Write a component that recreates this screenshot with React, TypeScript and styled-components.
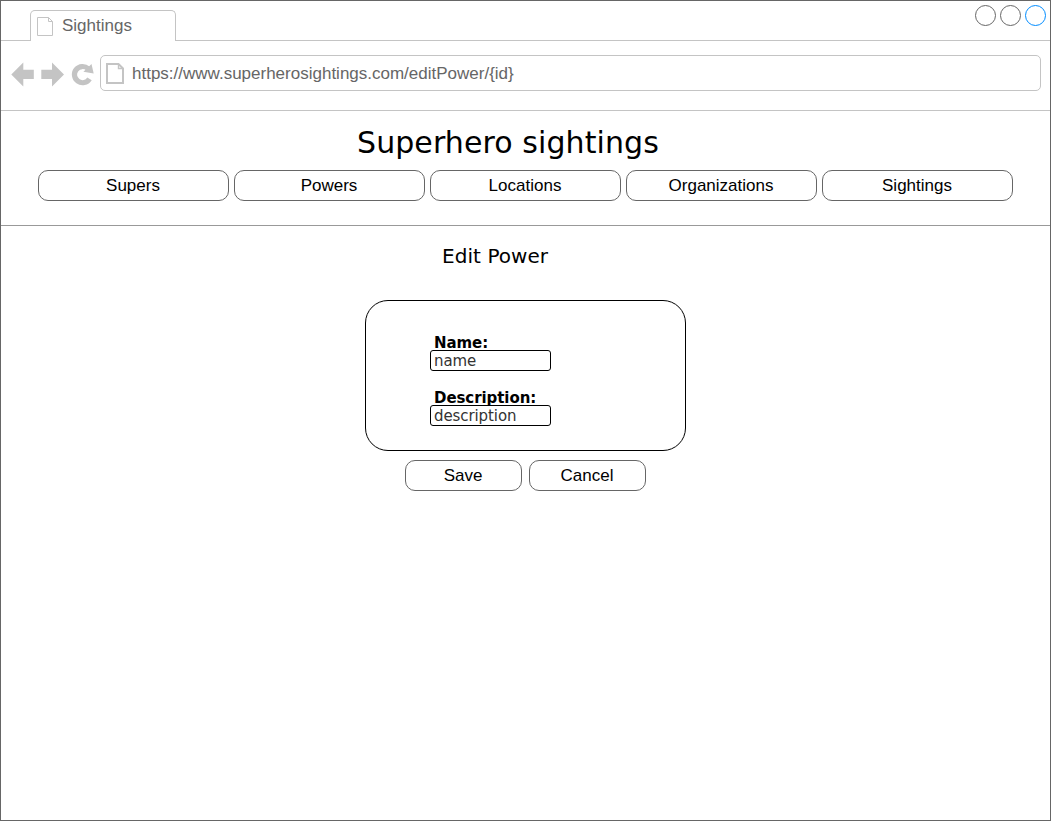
import React from "react";
import styled, { createGlobalStyle } from "styled-components";

const GlobalStyle = createGlobalStyle`
  *, *::before, *::after { box-sizing: border-box; }
  html, body { margin: 0; padding: 0; background: #fff; }
`;

const sans = `"Liberation Sans", Arial, sans-serif`;
const verdana = `"DejaVu Sans", Verdana, sans-serif`;

const Window = styled.div`
  width: 1051px;
  height: 821px;
  border: 1px solid #666;
  background: #fff;
  overflow: hidden;
  font-family: ${sans};
  font-size: 17px;
  color: #000;
`;

const TabStrip = styled.div`
  display: flex;
  height: 40px;
`;

const StripLine = styled.div<{ $width?: number }>`
  width: ${(p) => (p.$width ? `${p.$width}px` : "auto")};
  flex: ${(p) => (p.$width ? "none" : 1)};
  border-bottom: 1px solid #c4c4c4;
  display: flex;
  justify-content: flex-end;
  gap: 4px;
  padding: ${(p) => (p.$width ? "0" : "4px 4px 0 0")};
`;

const Tab = styled.div`
  width: 146px;
  height: 31px;
  margin-top: 9px;
  padding: 0 0 1px 7px;
  display: flex;
  align-items: center;
  border: 1px solid #c4c4c4;
  border-bottom: 0;
  border-radius: 5px 5px 0 0;
  color: #666;
  svg { margin: 2px 9px 0 -1px; }
`;

const WindowDot = styled.span<{ $color: string }>`
  width: 21px;
  height: 21px;
  border: 1px solid ${(p) => p.$color};
  border-radius: 50%;
`;

const AddressBar = styled.div`
  display: flex;
  align-items: flex-start;
  height: 70px;
  padding: 14px 9px 0 10px;
  border-bottom: 1px solid #c4c4c4;
`;

const AddressField = styled.div`
  flex: 1;
  display: flex;
  align-items: center;
  height: 36px;
  padding: 0 0 0 5px;
  border: 1px solid #c4c4c4;
  border-radius: 5px;
  color: #666;
  svg { margin-right: 8px; }
`;

const AddressText = styled.span`
  padding-top: 1px;
  line-height: 20px;
`;

const SiteHeader = styled.header`
  height: 115px;
  border-bottom: 1px solid #999;
`;

const SiteTitle = styled.h1`
  margin: 0;
  padding: 14px 0 0 356px;
  height: 59px;
  font: 400 30px/35px ${verdana};
  letter-spacing: 0.09px;
`;

const Nav = styled.nav`
  display: flex;
  gap: 5px;
  padding-left: 37px;
`;

const Button = styled.button<{ $width: number }>`
  width: ${(p) => p.$width}px;
  height: 31px;
  padding: 0 1px 0 0;
  border: 1px solid #666;
  border-radius: 10px;
  background: #fff;
  color: #000;
  font: 17px/29px ${sans};
  text-align: center;
`;

const PageTitle = styled.h2`
  margin: 0;
  padding: 18px 0 0 441px;
  height: 74px;
  font: 400 20px/24px ${verdana};
  letter-spacing: 0.06px;
`;

const Card = styled.section`
  width: 321px;
  height: 151px;
  margin-left: 364px;
  padding: 33px 0 0 64px;
  border: 1px solid #000;
  border-radius: 23px;
  font-family: ${verdana};
  font-size: 15px;
`;

const Field = styled.label`
  display: block;
  height: 55px;
`;

const FieldLabel = styled.span`
  display: block;
  height: 16px;
  padding-left: 4px;
  font-weight: 700;
  line-height: 18px;
  letter-spacing: -0.07px;
`;

const FieldInput = styled.input`
  display: block;
  width: 121px;
  height: 21px;
  padding: 0 0 0 3px;
  border: 1px solid #000;
  border-radius: 3px;
  outline: 0;
  background: #fff;
  color: #333;
  font: 15px/19px ${verdana};
  letter-spacing: -0.09px;
`;

const Actions = styled.div`
  display: flex;
  gap: 7px;
  padding: 9px 0 0 404px;
`;

const PageIcon = ({ w, h, stroke }: { w: number; h: number; stroke: number }) => {
  const i = stroke / 2;
  const fold = stroke > 1 ? 5.5 : 4.5;
  return (
    <svg width={w} height={h} fill="none" stroke="#c4c4c4" strokeWidth={stroke}>
      <path d={`M${i} ${i}H${w - fold}L${w - i} ${fold}V${h - i}H${i}Z`} />
      <path d={`M${w - fold} ${i}V${fold}H${w - i}`} strokeWidth={stroke > 1 ? 1.4 : 1} />
    </svg>
  );
};

const BrowserControls = () => (
  <svg width="89" height="36" fill="#c4c4c4">
    <path d="M0.3 19.5L12.3 7.5V14.8H22.8V23.9H12.3V31.5Z" />
    <path d="M53 19.5L41 7.5V14.8H30.3V23.9H41V31.5Z" />
    <path d="M78.5 23.8A8.1 8.1 0 1 1 77.1 13.7" fill="none" stroke="#c4c4c4" strokeWidth="5.2" />
    <path d="M80.5 9L82.7 18.6L72.4 16.7Z" />
  </svg>
);

const sections = ["Supers", "Powers", "Locations", "Organizations", "Sightings"];

export default function App() {
  return (
    <>
      <GlobalStyle />
      <Window>
        <TabStrip>
          <StripLine $width={29} />
          <Tab>
            <PageIcon w={16} h={19} stroke={1} />
            Sightings
          </Tab>
          <StripLine>
            <WindowDot $color="#666" />
            <WindowDot $color="#666" />
            <WindowDot $color="#008cff" />
          </StripLine>
        </TabStrip>
        <AddressBar>
          <BrowserControls />
          <AddressField>
            <PageIcon w={18} h={21} stroke={2} />
            <AddressText>https://www.superherosightings.com/editPower/&#123;id&#125;</AddressText>
          </AddressField>
        </AddressBar>
        <SiteHeader>
          <SiteTitle>Superhero sightings</SiteTitle>
          <Nav>
            {sections.map((s) => (
              <Button key={s} $width={191}>{s}</Button>
            ))}
          </Nav>
        </SiteHeader>
        <PageTitle>Edit Power</PageTitle>
        <Card>
          <Field>
            <FieldLabel>Name:</FieldLabel>
            <FieldInput defaultValue="name" />
          </Field>
          <Field>
            <FieldLabel>Description:</FieldLabel>
            <FieldInput defaultValue="description" />
          </Field>
        </Card>
        <Actions>
          <Button $width={117}>Save</Button>
          <Button $width={117}>Cancel</Button>
        </Actions>
      </Window>
    </>
  );
}
